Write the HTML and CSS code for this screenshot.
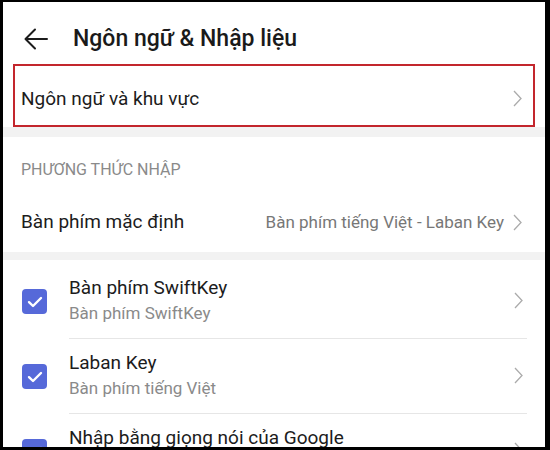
FILE: index.html
```html
<!DOCTYPE html>
<html lang="vi">
<head>
<meta charset="utf-8">
<title>Ngôn ngữ &amp; Nhập liệu</title>
<link rel="stylesheet" href="styles.css">
</head>
<body>
<div class="screen">
  <header class="header">
    <svg class="back" width="26" height="24" viewBox="0 0 26 24">
      <path d="M24 12 H3 M12 2.5 L2.5 12 L12 21.5" fill="none" stroke="#1c1c1c" stroke-width="2" stroke-linecap="round" stroke-linejoin="round"/>
    </svg>
    <h1 class="title">Ngôn ngữ &amp; Nhập liệu</h1>
  </header>

  <div class="row row-lang">
    <span class="row-label">Ngôn ngữ và khu vực</span>
    <svg class="chev" width="9" height="17" viewBox="0 0 9 17"><path d="M1 1 L8 8.5 L1 16" fill="none" stroke="#ababab" stroke-width="1.3"/></svg>
    <span class="highlight"></span>
  </div>

  <div class="band band-a"></div>

  <div class="section-title">PHƯƠNG THỨC NHẬP</div>
  <div class="row row-default">
    <span class="row-label">Bàn phím mặc định</span>
    <span class="row-value">Bàn phím tiếng Việt - Laban Key</span>
    <svg class="chev" width="9" height="17" viewBox="0 0 9 17"><path d="M1 1 L8 8.5 L1 16" fill="none" stroke="#ababab" stroke-width="1.3"/></svg>
  </div>

  <div class="band band-b"></div>

  <ul class="kb-list">
    <li class="kb-item">
      <span class="check"><svg width="16" height="12" viewBox="0 0 16 12"><path d="M2 6.2 L6 10 L14 2" fill="none" stroke="#fff" stroke-width="2.4" stroke-linecap="round" stroke-linejoin="round"/></svg></span>
      <div class="kb-body">
        <div class="kb-text">
          <div class="kb-title">Bàn phím SwiftKey</div>
          <div class="kb-sub">Bàn phím SwiftKey</div>
        </div>
        <svg class="chev" width="9" height="17" viewBox="0 0 9 17"><path d="M1 1 L8 8.5 L1 16" fill="none" stroke="#ababab" stroke-width="1.3"/></svg>
      </div>
    </li>
    <li class="kb-item">
      <span class="check"><svg width="16" height="12" viewBox="0 0 16 12"><path d="M2 6.2 L6 10 L14 2" fill="none" stroke="#fff" stroke-width="2.4" stroke-linecap="round" stroke-linejoin="round"/></svg></span>
      <div class="kb-body">
        <div class="kb-text">
          <div class="kb-title">Laban Key</div>
          <div class="kb-sub">Bàn phím tiếng Việt</div>
        </div>
        <svg class="chev" width="9" height="17" viewBox="0 0 9 17"><path d="M1 1 L8 8.5 L1 16" fill="none" stroke="#ababab" stroke-width="1.3"/></svg>
      </div>
    </li>
    <li class="kb-item">
      <span class="check"><svg width="16" height="12" viewBox="0 0 16 12"><path d="M2 6.2 L6 10 L14 2" fill="none" stroke="#fff" stroke-width="2.4" stroke-linecap="round" stroke-linejoin="round"/></svg></span>
      <div class="kb-body">
        <div class="kb-text">
          <div class="kb-title">Nhập bằng giọng nói của Google</div>
          <div class="kb-sub">Nhập liệu bằng giọng nói</div>
        </div>
        <svg class="chev" width="9" height="17" viewBox="0 0 9 17"><path d="M1 1 L8 8.5 L1 16" fill="none" stroke="#ababab" stroke-width="1.3"/></svg>
      </div>
    </li>
  </ul>
</div>
</body>
</html>
```
FILE: styles.css
```css
html, body {
  margin: 0;
  padding: 0;
  background: #000;
  width: 550px;
  height: 450px;
  overflow: hidden;
}

.screen {
  margin: 2px 0 0 3px;
  width: 542px;
  height: 445px;
  background: #fff;
  overflow: hidden;
  font-family: Roboto, "Noto Sans", sans-serif;
  color: #1c1c1c;
}

.header {
  display: flex;
  align-items: center;
  height: 62px;
  padding: 12px 0 0 20px;
  box-sizing: border-box;
}

.back {
  display: block;
  flex: none;
}

.title {
  margin: 0 0 0 24px;
  font-size: 23px;
  font-weight: 500;
  line-height: 26px;
  color: #1a1a1a;
}

.row {
  position: relative;
  display: flex;
  align-items: center;
  padding: 0 23px 0 18px;
}

.row-lang {
  height: 63px;
  padding-top: 6px;
  box-sizing: border-box;
}

.row-label {
  flex: 1;
  font-size: 19px;
  line-height: 24px;
}

.chev {
  display: block;
  flex: none;
}

.highlight {
  position: absolute;
  left: 10px;
  top: 0;
  width: 522px;
  height: 63px;
  border: 2px solid #c3262d;
  box-sizing: border-box;
}

.band {
  background: #f2f2f2;
}

.band-a {
  height: 10px;
}

.band-b {
  height: 8px;
}

.section-title {
  padding: 22px 0 0 18px;
  height: 31px;
  font-size: 16px;
  line-height: 22px;
  color: #8a8a8a;
}

.row-default {
  height: 62px;
  padding-top: 2px;
  box-sizing: border-box;
}

.row-value {
  font-size: 17px;
  line-height: 22px;
  color: #777;
  margin-right: 9px;
}

.kb-list {
  list-style: none;
  margin: 0;
  padding: 4px 0 0 0;
}

.kb-item {
  display: flex;
  align-items: center;
  padding-left: 19px;
}

.check {
  flex: none;
  display: flex;
  align-items: center;
  justify-content: center;
  width: 25px;
  height: 25px;
  border-radius: 4px;
  background: #5669d9;
  margin-right: 22px;
}

.check svg {
  display: block;
}

.kb-body {
  flex: 1;
  display: flex;
  align-items: center;
  margin-right: 18px;
  padding: 11px 4px 13px 0;
  border-bottom: 1px solid #e6e6e6;
}

.kb-text {
  flex: 1;
}

.kb-title {
  font-size: 19px;
  line-height: 26px;
  color: #1c1c1c;
}

.kb-sub {
  font-size: 17px;
  line-height: 24px;
  color: #8a8a8a;
}
```
